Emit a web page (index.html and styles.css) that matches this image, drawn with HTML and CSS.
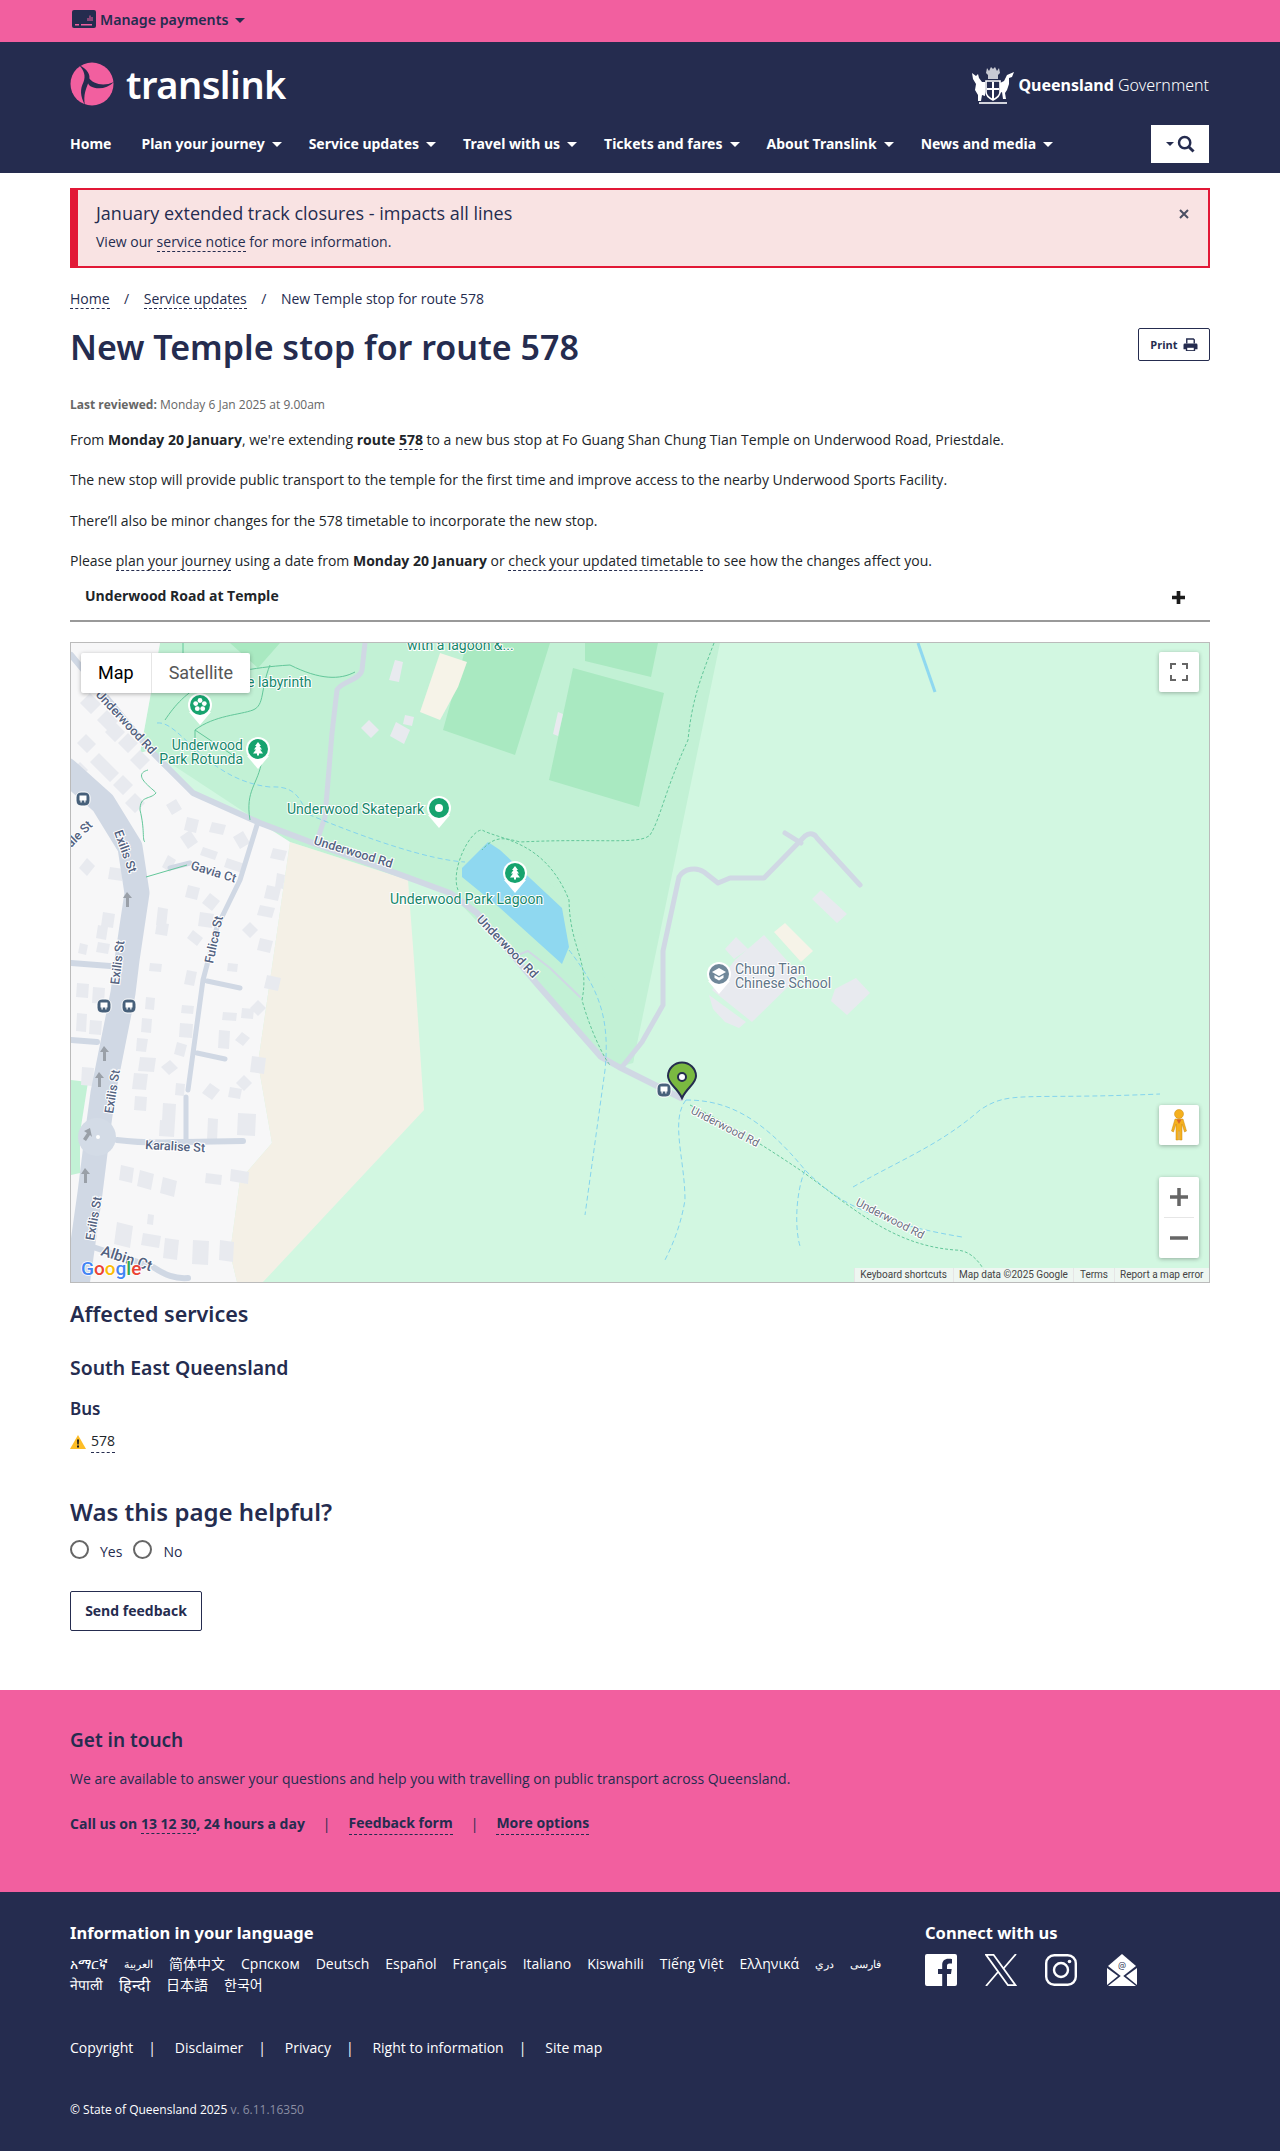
FILE: index.html
```html
<!DOCTYPE html>
<html lang="en">
<head>
<title>New Temple stop for route 578</title>
<meta charset="utf-8">
<link rel="stylesheet" href="styles.css">
</head>
<body>

<div class="topbar">
  <div class="wrap topbar-inner">
    <svg class="pay-icon" viewBox="0 0 24 18"><rect width="24" height="18" rx="2" fill="#252c4f"/><path d="M3 14h4v1.4H3zM9 14h11v1.4H9z" fill="#f25f9f"/><path d="M16 11V8M18 11V5.5M20 11V7" stroke="#f25f9f" stroke-width="1"/></svg>
    <span class="pay-label">Manage payments</span>
    <span class="caret caret-dark"></span>
  </div>
</div>

<header class="masthead">
  <div class="wrap">
    <div class="brand-row">
      <div class="logo">
        <svg class="logo-mark" viewBox="0 0 44 44">
          <circle cx="22" cy="22" r="21.5" fill="#f25f9f"/>
          <path d="M9 3C17 7 21 12 19 19C16 27 13 33 15 43C10 34 10 27 13.500 20C16 14 14 8 9 3Z" fill="#252c4f"/>
          <path d="M18 15C23 22 33 25 44 20C37 27 27 28 20 24C17.500 22 17 19 18 15Z" fill="#252c4f"/>
        </svg>
        <span class="logo-text">translink</span>
      </div>
      <div class="qgov">
        <svg class="crest" viewBox="0 0 44 42" fill="#fff">
          <path d="M1 10l4 3 2-2 1 4 3 4 3 0v14l-3-1-1 6h-3l0-6-3-5 1-6-3-5z"/>
          <path d="M43 9l-2 5-3 1 0 6-2 6-2 3 1 6h-3l-1-7-2 1V20l4-2 3-6z"/>
          <path d="M15 18h14v11c0 4-3 6-7 8-4-2-7-4-7-8z" fill="none" stroke="#fff" stroke-width="1.6"/>
          <path d="M21 19h2v17h-2zM16 25h12v2H16z"/>
          <path d="M18 8l2-4 2 2 2-2 2 4 2-3 1 5-2 2v4H17v-4l-2-2 1-5z" fill-opacity=".75"/>
          <path d="M8 39h28v2H8z" fill-opacity=".8"/>
        </svg>
        <span class="qgov-text"><b>Queensland</b> Government</span>
      </div>
    </div>
    <nav class="nav-row">
      <a class="nav-item nav-home">Home</a>
      <a class="nav-item">Plan your journey<span class="caret"></span></a>
      <a class="nav-item">Service updates<span class="caret"></span></a>
      <a class="nav-item">Travel with us<span class="caret"></span></a>
      <a class="nav-item">Tickets and fares<span class="caret"></span></a>
      <a class="nav-item">About Translink<span class="caret"></span></a>
      <a class="nav-item">News and media<span class="caret"></span></a>
      <button class="search-btn">
        <span class="caret caret-dark caret-small"></span>
        <svg viewBox="0 0 16 16" width="18" height="18"><circle cx="6.8" cy="6.8" r="5" fill="none" stroke="#252c4f" stroke-width="2.2"/><path d="M10.4 10.4l4.3 4.3" stroke="#252c4f" stroke-width="2.6"/></svg>
      </button>
    </nav>
  </div>
</header>

<main class="wrap main">
  <div class="alert">
    <div>
      <div class="alert-title">January extended track closures - impacts all lines</div>
      <div class="alert-text">View our <a class="dash">service notice</a> for more information.</div>
    </div>
    <svg class="alert-close" viewBox="0 0 10 10" width="10" height="10"><path d="M1 1l8 8M9 1l-8 8" stroke="#4a4f63" stroke-width="2"/></svg>
  </div>

  <div class="crumbs">
    <a class="dash">Home</a><span class="sep">/</span><a class="dash">Service updates</a><span class="sep">/</span><span>New Temple stop for route 578</span>
  </div>

  <div class="title-row">
    <h1>New Temple stop for route 578</h1>
    <button class="print-btn">Print
      <svg viewBox="0 0 16 15" width="15" height="14"><path d="M4 6V1h7l1 1v4" fill="none" stroke="#252c4f" stroke-width="1.5"/><path d="M2 6h12a1.5 1.5 0 0 1 1.5 1.5V12H13v2H3v-2H.5V7.500A1.500 1.500 0 0 1 2 6z" fill="#252c4f"/><path d="M4.500 10.500h7v2.500h-7z" fill="#fff"/></svg>
    </button>
  </div>

  <p class="reviewed"><b>Last reviewed:</b> Monday 6 Jan 2025 at 9.00am</p>

  <p class="copy">From <b>Monday 20 January</b>, we're extending <b>route <a class="dash">578</a></b> to a new bus stop at Fo Guang Shan Chung Tian Temple on Underwood Road, Priestdale.</p>
  <p class="copy">The new stop will provide public transport to the temple for the first time and improve access to the nearby Underwood Sports Facility.</p>
  <p class="copy">There’ll also be minor changes for the 578 timetable to incorporate the new stop.</p>
  <p class="copy copy-last">Please <a class="dash">plan your journey</a> using a date from <b>Monday 20 January</b> or <a class="dash">check your updated timetable</a> to see how the changes affect you.</p>

  <div class="accordion">
    <b>Underwood Road at Temple</b>
    <svg class="accordion-plus" viewBox="0 0 12 12" width="13" height="13"><path d="M6 0v12M0 6h12" stroke="#1b1b1b" stroke-width="3.400"/></svg>
  </div>

  <div class="map-box">
    <svg class="map" viewBox="71 643 1138 639" preserveAspectRatio="none">
      <rect x="71" y="643" width="1138" height="639" fill="#d2f7e1"/>
      <!-- park and fields -->
      <path d="M160 643H720L633 1063 619 1067 601 1057 537 984 477 913 600 1050 450 893 290 842 150 750 140 753Z" fill="#c2f1d5"/>
      <path d="M410 880L450 893 540 975 600 1052 633 1063 640 1020 590 960 569 900 500 840 440 860Z" fill="#c2f1d5"/>
      <path d="M230 643H280L258 668ZM467 643H550L515 755 443 730ZM585 643H658L651 677 585 661ZM573 668L664 693 639 807 549 780Z" fill="#a9e9c1"/>
      <!-- residential and sand -->
      <path d="M71 643H160L140 753 163 783 150 860 132 830 140 753 150 750 193 793 260 823 290 842 273 960 258 1063 272 1143 240 1180 230 1253 237 1282H71Z" fill="#f7f7f8"/>
      <path d="M71 1080L88 1082 80 1133 80 1173 71 1175Z" fill="#c2f1d5"/>
      <path d="M290 842L408 880 414 960 424 1110 263 1282H237L230 1253 240 1180 272 1143 258 1063 273 960Z" fill="#f4f0e6"/>
      <path d="M440 653L467 662 458 687 440 720 420 712Z" fill="#f6f3e8"/>
      <!-- lagoon -->
      <path d="M488 842L462 868 462 877 500 908 562 964 569 947 562 908 500 850Z" fill="#8fd8f0"/>
      <path d="M918 643L935 692" stroke="#8fd8f0" stroke-width="3" fill="none"/>
      <!-- buildings -->
      <path class="bld" d="M80 703l10-10 11 11-10 10zM97 720l10-10 11 11-10 10zM105 732l10-10 10 10-10 10zM118 743l10-10 10 10-10 10zM130 760l10-10 10 10-10 10zM77 743l9-9 10 10-9 9zM90 762l9-9 10 10-9 9zM100 772l9-9 10 10-9 9zM113 785l10-10 10 10-10 10zM125 803l10-10 10 10-10 10zM72 770l8-8 8 8-8 8z"/>
      <path class="bld" d="M166 805l10-6 6 10-10 6zM187 817l12 3-3 13-12-3zM212 822l14 3-3 10-14-3zM233 837l10-6 7 12-10 6zM180 837l10-7 8 12-10 7zM203 847l15 5-3 8-15-5zM227 858l18 6-3 9-18-6zM168 855l8 5-6 12-8-5zM273 848l14 3-3 10-14-3zM277 873l8 2-2 14-8-2zM267 885l14 3-3 13-14-3zM260 905l15 3-3 10-15-3zM250 922l8 8-8 8-8-8zM260 938l13 3-3 12-13-3zM210 893l10 8-8 10-10-8zM188 885l12 3-3 12-12-3zM200 912l14 2-2 14-14-2zM158 907l10 2-2 18-10-2zM157 922l12 2-2 12-12-2zM193 930l10 8-6 8-10-8zM103 912l12 2-2 14-12-2zM98 925l10 2-2 13-10-2zM110 867l14 2-2 12-14-2zM87 858l8 8-8 10-8-8zM98 942l12 2-2 10-12-2zM80 943l8 2-2 10-8-2z"/>
      <path class="bld" d="M150 963l12 1-1 8-12-1zM187 970l10 2-3 14-10-2zM228 963l10 1-1 8-10-1zM267 975l14 3-3 13-14-3zM146 997l9 1-1 12-9-1zM182 1005l12 1-1 8-12-1zM223 1012l14 1-1 8-14-1zM242 1008l12 1-1 10-12-1zM258 1000l8 8-8 8-8-8zM142 1018l10 1-1 14-10-1zM180 1023l13 1-1 14-13-1zM219 1030l11 1-1 18-11-1zM242 1032l8 6-7 8-8-6zM137 1038l11 1-2 13-10-1zM177 1042l10 3-3 12-10-3zM140 1057l16 1-2 14-16-1zM170 1060l8 8-9 7-8-8zM252 1056l14 2-2 16-14-2zM134 1073l14 1-2 16-14-1zM176 1083l9 1-1 12-9-1zM210 1083l10 7-8 10-10-7zM230 1087l12 2-2 10-12-2zM244 1075l8 8-8 8-8-8zM135 1096l12 1-1 14-12-1zM163 1103l13 1-1 18-13-1zM160 1120l15 1-1 16-15-1zM208 1118l10 1-1 22-10-1zM238 1113l18 1-1 22-18-1zM121 1165l13 3-2 15-13-3zM140 1170l14 4-3 16-14-4zM163 1177l14 4-3 16-14-4zM206 1173l16 2-1 10-16-2zM231 1169l18 3-1 12-18-3zM117 1222l16 4-3 22-16-4zM143 1233l18 3-2 12-18-3zM165 1238l14 2-2 20-14-2zM193 1240l16 1-1 24-16-1zM220 1240l14 2-1 20-14-2zM148 1214l6 1-1 10-6-1zM77 983l12 1-1 14-12-1zM93 987l12 1-1 16-12-1zM90 1020l12 1-1 14-12-1zM77 1013l10 1-1 18-10-1zM82 1067l12 1-1 18-12-1z"/>
      <path class="bld" d="M764 935L800 975 752 1022 712 990 735 960ZM736 937L748 949 734 959 725 949ZM821 890L847 914 837 923 812 899ZM856 978L870 993 847 1015 831 1001 835 989ZM709 995L746 1022 739 1028 725 1022 713 1009ZM395 660l8 2-4 20-10-2zM405 715l9 2-2 9-9-2zM369 720l10 10-8 8-10-10zM396 722l14 8-6 14-14-8zM558 712l5 2-5 22-5-2z"/>
      <path d="M785 923L813 951 801 962 774 932Z" fill="#f6f3e8"/>
      <!-- roads -->
      <g class="road">
        <path d="M71 655L150 750 193 793 260 823 313 843 393 872 450 893 477 913 537 984 601 1057 619 1067 681 1098" stroke-width="6"/>
        <path d="M365 643L362 670C360 680 340 682 337 690L332 733 325 817 318 838" stroke-width="5"/>
        <path d="M622 1067L642 1042 663 1005V951L679 877C684 868 697 867 704 872L718 883 730 878H764L805 836C810 832 815 834 817 838L860 885M785 833L801 843" stroke-width="5"/>
        <path d="M518 955L528 951 550 968 580 997" stroke-width="2"/>
        <path d="M257 825L240 880 217 927 203 980 188 1090M186 1097V1140M207 981L240 988M197 1053L225 1059" stroke-width="5"/>
        <path d="M117 1140C140 1143 160 1143 186 1142L243 1141" stroke-width="6"/>
        <path d="M190 863L170 868" stroke-width="5"/>
        <path d="M93 1247L153 1267C165 1275 175 1279 188 1278M71 963L110 966M71 1040L97 1042" stroke-width="6"/>
        <path d="M66 770L103 803 130 847 137 893 127 960 123 993 103 1093 97 1137 90 1193 77 1285" stroke-width="25"/>
      </g>
      <circle cx="97" cy="1137" r="19" fill="#d3dbe6"/>
      <circle cx="98" cy="1137" r="2" fill="#fff"/>
      <!-- paths -->
      <g class="trail-green">
        <path d="M183 643V680M165 720C185 690 210 670 290 665 320 680 340 680 355 672M195 730C215 715 240 715 253 710 265 705 260 690 270 665M195 730V755M195 730L240 760M262 760C258 785 245 790 250 820M148 770C130 775 155 790 156 793 150 800 140 795 140 810 145 830 142 840 145 842M146 877L187 865"/>
      </g>
      <g class="trail-green dashed">
        <path d="M714 643C700 680 692 700 688 740 665 790 660 820 650 835 640 845 600 838 520 842 505 838 495 835 482 850M458 890C450 870 470 830 482 830 500 840 545 840 569 900 570 950 590 960 582 1000 590 1030 605 1060 610 1065M690 1105C740 1130 770 1150 800 1170 850 1205 890 1245 955 1250 975 1250 985 1270 990 1283"/>
      </g>
      <g class="trail-blue">
        <path d="M157 723C180 720 205 780 270 787 300 785 300 805 310 815 370 840 430 860 465 862M569 950C600 990 610 1020 605 1070L585 1215M686 1100C725 1100 760 1115 805 1170 830 1195 860 1220 962 1237M686 1100C670 1120 685 1160 685 1200 680 1230 670 1250 664 1262M805 1170C795 1195 795 1230 800 1246M853 1187C900 1160 940 1145 980 1110 1010 1090 1020 1100 1160 1094"/>
      </g>
      <!-- labels -->
      <g class="poi-label">
        <text x="407" y="650">with a lagoon &amp;...</text>
        <text x="247" y="687">e labyrinth</text>
        <text x="243" y="750" text-anchor="end">Underwood</text>
        <text x="243" y="764" text-anchor="end">Park Rotunda</text>
        <text x="287" y="814">Underwood Skatepark</text>
        <text x="390" y="904">Underwood Park Lagoon</text>
      </g>
      <g class="poi-label poi-grey">
        <text x="735" y="974">Chung Tian</text>
        <text x="735" y="988">Chinese School</text>
      </g>
      <g class="road-label">
        <text transform="translate(95 695) rotate(47)">Underwood Rd</text>
        <text transform="translate(313 844) rotate(17)">Underwood Rd</text>
        <text transform="translate(476 920) rotate(46)">Underwood Rd</text>
        <text transform="translate(190 869) rotate(17)">Gavia Ct</text>
        <text transform="translate(213 964) rotate(-78)">Fulica St</text>
        <text transform="translate(114 832) rotate(70)">Exilis St</text>
        <text transform="translate(119 985) rotate(-83)">Exilis St</text>
        <text transform="translate(113 1114) rotate(-81)">Exilis St</text>
        <text transform="translate(94 1241) rotate(-80)">Exilis St</text>
        <text transform="translate(145 1149) rotate(3)">Karalise St</text>
        <text transform="translate(71 848) rotate(-45)">ale St</text>
        <text class="road-label-big" transform="translate(100 1255) rotate(18)">Albin Ct</text>
      </g>
      <g class="road-label road-label-thin">
        <text transform="translate(690 1113) rotate(27)">Underwood Rd</text>
        <text transform="translate(855 1205) rotate(27)">Underwood Rd</text>
      </g>
      <!-- one way arrows -->
      <path class="arrow" d="M127 892l-4 6h3v9h3v-9h3zM104 1046l-4 6h3v9h3v-9h3zM99 1072l-4 6h3v9h3v-9h3zM85 1168l-4 6h3v9h3v-9h3zM90 1128l-6 3 3 2-4 6 3 2 4-6 2 2z"/>
      <!-- markers -->
      <g class="poi">
        <path d="M189 712L200 725 211 712Z" fill="#fff"/><circle cx="200" cy="705" r="12" fill="#fff"/><circle cx="200" cy="705" r="10"/>
        <g fill="#fff"><circle cx="200" cy="700.500" r="2.400"/><circle cx="204.300" cy="703.600" r="2.400"/><circle cx="202.700" cy="708.700" r="2.400"/><circle cx="197.300" cy="708.700" r="2.400"/><circle cx="195.700" cy="703.600" r="2.400"/></g>
        <path d="M247 756L258 769 269 756Z" fill="#fff"/><circle cx="258" cy="749" r="12" fill="#fff"/><circle cx="258" cy="749" r="10"/>
        <path d="M258 742l-3 4h1.500l-2.500 3.500h2l-3 4h4v2h2v-2h4l-3-4h2l-2.500-3.500h1.500z" fill="#fff"/>
        <path d="M428 815L439 828 450 815Z" fill="#fff"/><circle cx="439" cy="808" r="12" fill="#fff"/><circle cx="439" cy="808" r="10"/>
        <circle cx="439" cy="808" r="4" fill="#fff"/>
        <path d="M504 880L515 893 526 880Z" fill="#fff"/><circle cx="515" cy="873" r="12" fill="#fff"/><circle cx="515" cy="873" r="10"/>
        <path d="M515 866l-3 4h1.500l-2.500 3.500h2l-3 4h4v2h2v-2h4l-3-4h2l-2.500-3.500h1.500z" fill="#fff"/>
        <path d="M708 981L719 994 730 981Z" fill="#fff"/><circle cx="719" cy="974" r="12" fill="#fff"/><circle cx="719" cy="974" r="10" fill="#6f8799"/>
        <path d="M719 968l-7 4 7 4 7-4zM714.500 975v3l4.500 2.500 4.500-2.500v-3l-4.500 2.500z" fill="#fff"/>
      </g>
      <g class="bus">
        <rect x="76" y="792" width="14" height="14" rx="5"/><rect x="97" y="999" width="14" height="14" rx="5"/><rect x="122" y="999" width="14" height="14" rx="5"/><rect x="657" y="1083" width="14" height="14" rx="5"/>
        <path fill="#fff" d="M79.500 795.500h7v5h-1v2h-1.200v-2h-2.600v2h-1.200v-2h-1zM100.500 1002.500h7v5h-1v2h-1.200v-2h-2.600v2h-1.200v-2h-1zM125.500 1002.500h7v5h-1v2h-1.200v-2h-2.600v2h-1.200v-2h-1zM660.500 1086.500h7v5h-1v2h-1.200v-2h-2.600v2h-1.200v-2h-1z"/>
      </g>
      <path d="M682 1098C677 1087 668 1084 668 1076A14 13.500 0 0 1 696 1076C696 1084 687 1087 682 1098Z" fill="#7ab941" stroke="#252c4f" stroke-width="2"/>
      <circle cx="682" cy="1077" r="4" fill="#fff" stroke="#252c4f" stroke-width="2"/>
      <text class="g-logo" x="81" y="1275"><tspan fill="#4285f4">G</tspan><tspan fill="#ea4335">o</tspan><tspan fill="#fbbc05">o</tspan><tspan fill="#4285f4">g</tspan><tspan fill="#34a853">l</tspan><tspan fill="#ea4335">e</tspan></text>
    </svg>

    <div class="map-types">
      <span class="map-type map-type-on">Map</span>
      <span class="map-type">Satellite</span>
    </div>
    <div class="map-ctl map-full">
      <svg viewBox="0 0 18 18" width="18" height="18"><path d="M1 6V1h5M12 1h5v5M17 12v5h-5M6 17H1v-5" fill="none" stroke="#666" stroke-width="2"/></svg>
    </div>
    <div class="map-ctl map-peg">
      <svg viewBox="0 0 18 32" width="18" height="32"><circle cx="9" cy="5" r="4.500" fill="#f5b01e" stroke="#c98a10" stroke-width=".5"/><path d="M5 10h8l3.500 12-2 1L12 15v16H9.500V22h-1v9H6V15L3.500 23l-2-1Z" fill="#f5b01e" stroke="#c98a10" stroke-width=".5"/><path d="M6.500 10.500L9 15l2.500-4.500z" fill="#d9682a"/></svg>
    </div>
    <div class="map-ctl map-zoom">
      <svg viewBox="0 0 18 18" width="18" height="18"><path d="M9 0v18M0 9h18" stroke="#666" stroke-width="3.500"/></svg>
      <span class="zoom-line"></span>
      <svg viewBox="0 0 18 18" width="18" height="18"><path d="M0 9h18" stroke="#666" stroke-width="3.500"/></svg>
    </div>
    <div class="map-attr">
      <span>Keyboard shortcuts</span><span>Map data ©2025 Google</span><span>Terms</span><span>Report a map error</span>
    </div>
  </div>

  <h2 class="affected">Affected services</h2>
  <h3 class="region">South East Queensland</h3>
  <h4 class="mode">Bus</h4>
  <div class="route-row">
    <svg viewBox="0 0 16 14" width="16" height="14"><path d="M8 0l8 14H0z" fill="#fdbd26"/><path d="M7 4.500h2l-.3 5H7.300zM7 10.500h2v2H7z" fill="#1b1b1b"/></svg>
    <a class="dash">578</a>
  </div>

  <h2 class="helpful">Was this page helpful?</h2>
  <div class="radios">
    <label class="radio"><span class="radio-dot"></span>Yes</label>
    <label class="radio"><span class="radio-dot"></span>No</label>
  </div>
  <button class="send-btn">Send feedback</button>
</main>

<section class="touch">
  <div class="wrap">
    <h2 class="touch-title">Get in touch</h2>
    <p class="touch-text">We are available to answer your questions and help you with travelling on public transport across Queensland.</p>
    <div class="touch-links">
      <span>Call us on <a class="dash">13 12 30</a>, 24 hours a day</span><span class="bar">|</span><a class="dash">Feedback form</a><span class="bar">|</span><a class="dash">More options</a>
    </div>
  </div>
</section>

<footer class="footer">
  <div class="wrap">
    <div class="footer-top">
      <div class="lang-col">
        <h3 class="foot-title">Information in your language</h3>
        <div class="langs">
          <a>አማርኛ</a><a class="lang-small">العربية</a><a>简体中文</a><a>Српском</a><a>Deutsch</a><a>Español</a><a>Français</a><a>Italiano</a><a>Kiswahili</a><a>Tiếng Việt</a><a>Ελληνικά</a><a class="lang-small">دري</a><a class="lang-small">فارسی</a><a>नेपाली</a><a class="lang-big">हिन्दी</a><a>日本語</a><a>한국어</a>
        </div>
      </div>
      <div class="connect-col">
        <h3 class="foot-title">Connect with us</h3>
        <div class="socials">
          <svg viewBox="0 0 32 32" width="32" height="32"><path d="M2 0h28a2 2 0 0 1 2 2v28a2 2 0 0 1-2 2h-8V20h4l.7-5H22v-3c0-1.500.5-2.500 2.600-2.500H27V5c-.5 0-2-.2-3.700-.2-3.600 0-6.100 2.200-6.100 6.300V15H13v5h4.200v12H2a2 2 0 0 1-2-2V2a2 2 0 0 1 2-2z" fill="#fff"/></svg>
          <svg viewBox="0 0 32 32" width="32" height="32"><path d="M1 32L13 18M31 0L18.500 14.500" stroke="#fff" stroke-width="1.800"/><path d="M1 .8h7.500L30.500 31.200H23Z" fill="none" stroke="#fff" stroke-width="1.800"/></svg>
          <svg viewBox="0 0 32 32" width="32" height="32" fill="none" stroke="#fff" stroke-width="2.400"><rect x="1.200" y="1.200" width="29.600" height="29.600" rx="8"/><circle cx="16" cy="16" r="7"/><circle cx="24.500" cy="7.500" r="1.800" fill="#fff" stroke="none"/></svg>
          <svg class="mail-icon" viewBox="0 0 30 32" width="30" height="32"><path d="M15 0L29 12 15 23 1 12Z" fill="#fff"/><path d="M0 14L11 22 0 31ZM30 14L19 22 30 31ZM1 32L15 21 29 32Z" fill="#fff"/><text class="mail-at" x="15" y="15" text-anchor="middle">@</text></svg>
        </div>
      </div>
    </div>
    <div class="foot-links">
      <a>Copyright</a><span class="foot-bar">|</span><a>Disclaimer</a><span class="foot-bar">|</span><a>Privacy</a><span class="foot-bar">|</span><a>Right to information</a><span class="foot-bar">|</span><a>Site map</a>
    </div>
    <p class="copyright">© State of Queensland 2025 <span>v. 6.11.16350</span></p>
  </div>
</footer>

</body>
</html>
```

FILE: styles.css
```css
body {
  margin: 0;
  background: #fff;
  color: #212529;
  font-family: "Open Sans", "Noto Sans CJK SC", sans-serif;
  font-size: 14px;
  line-height: 22px;
}

p, h1, h2, h3, h4 {
  margin: 0;
}

.wrap {
  width: 1140px;
  margin-left: auto;
  margin-right: auto;
}

.dash {
  border-bottom: 1px dashed #252c4f;
}

.caret {
  display: inline-block;
  width: 0;
  height: 0;
  margin-left: 7px;
  vertical-align: 2px;
  border-left: 5px solid transparent;
  border-right: 5px solid transparent;
  border-top: 5px solid #fff;
}

.caret-dark {
  border-top-color: #252c4f;
}

.caret-small {
  margin-left: 0;
  margin-right: 3px;
  border-left-width: 4px;
  border-right-width: 4px;
  border-top-width: 4px;
}

/* top bars */
.topbar {
  height: 42px;
  background: #f25f9f;
}

.topbar-inner {
  display: flex;
  align-items: center;
  height: 40px;
  padding-left: 2px;
  box-sizing: border-box;
  color: #252c4f;
}

.pay-icon {
  width: 24px;
  height: 18px;
  margin-right: 4px;
  margin-top: -2px;
}

.pay-label {
  font-family: "Noto Sans", sans-serif;
  font-weight: 600;
  font-size: 14.2px;
}

.masthead {
  height: 131px;
  background: #252c4f;
  color: #fff;
}

.brand-row {
  display: flex;
  justify-content: space-between;
  align-items: center;
  height: 83px;
}

.logo {
  display: flex;
  align-items: center;
}

.logo-mark {
  width: 44px;
  height: 44px;
}

.logo-text {
  margin-left: 12px;
  font-family: "Noto Sans", sans-serif;
  font-weight: 600;
  font-size: 38px;
  line-height: 44px;
  letter-spacing: -.5px;
}

.qgov {
  display: flex;
  align-items: center;
  margin-right: 1px;
}

.crest {
  width: 44px;
  height: 42px;
  margin-right: 3px;
}

.qgov-text {
  margin-top: 2px;
  font-family: "Noto Sans", sans-serif;
  font-weight: 300;
  font-size: 16px;
}

.qgov-text b {
  font-weight: 700;
}

.nav-row {
  display: flex;
  align-items: center;
  height: 38px;
}

.nav-item {
  margin-right: 27px;
  font-family: "Noto Sans", sans-serif;
  font-weight: 700;
  font-size: 14px;
  white-space: nowrap;
}

.nav-home {
  margin-right: 30px;
}

.search-btn {
  display: flex;
  align-items: center;
  justify-content: center;
  width: 58px;
  height: 38px;
  margin-left: auto;
  margin-right: 1px;
  padding: 0;
  border: 0;
  background: #fff;
}

/* main column */
.main {
  padding-bottom: 59px;
}

.alert {
  display: flex;
  justify-content: space-between;
  box-sizing: border-box;
  height: 80px;
  margin-top: 15px;
  padding: 11px 19px 0 18px;
  border: 2px solid #e21836;
  border-left-width: 8px;
  background: #f9e3e3;
}

.alert-title {
  font-size: 18px;
  line-height: 24px;
  color: #252c4f;
}

.alert-text {
  margin-top: 6px;
  line-height: 22px;
  color: #252c4f;
}

.alert-close {
  margin-top: 8px;
}

.crumbs {
  margin-top: 21px;
  line-height: 20px;
  color: #252c4f;
}

.sep {
  margin: 0 14.5px;
}

.title-row {
  display: flex;
  justify-content: space-between;
  align-items: flex-start;
  margin-top: 19px;
}

h1 {
  margin-top: -1px;
  font-family: "Noto Sans", sans-serif;
  font-weight: 600;
  font-size: 34px;
  line-height: 40px;
  color: #252c4f;
}

.print-btn {
  display: flex;
  align-items: center;
  justify-content: center;
  gap: 5px;
  width: 72px;
  height: 33px;
  padding: 0;
  border: 1px solid #252c4f;
  border-radius: 2px;
  background: #fff;
  color: #252c4f;
  font-family: "Open Sans", sans-serif;
  font-weight: 700;
  font-size: 11px;
}

.reviewed {
  margin-top: 29px;
  font-size: 12px;
  line-height: 18px;
  color: #666;
}

.copy {
  margin-top: 15px;
  margin-bottom: 18.4px;
}

.copy + .copy {
  margin-top: 0;
}

.copy-last {
  margin-bottom: 0;
}

.accordion {
  display: flex;
  justify-content: space-between;
  align-items: center;
  padding: 13px 25px 13px 15px;
  border-bottom: 2px solid #999;
}

.accordion-plus {
  margin-top: 2px;
}

/* map */
.map-box {
  position: relative;
  box-sizing: border-box;
  height: 641px;
  margin-top: 20px;
  border: 1px solid #bbb;
  overflow: hidden;
}

.map {
  display: block;
  width: 1138px;
  height: 639px;
}

.map text {
  font-family: Roboto, sans-serif;
}

.bld {
  fill: #e8eaef;
}

.road path {
  fill: none;
  stroke: #d0d8e4;
  stroke-linecap: round;
  stroke-linejoin: round;
}

.trail-green path {
  fill: none;
  stroke: #63c79a;
  stroke-width: 1;
}

.dashed path {
  stroke-dasharray: 3 2;
}

.trail-blue path {
  fill: none;
  stroke: #84d4ee;
  stroke-width: 1;
  stroke-dasharray: 5 3;
}

.poi-label text {
  font-size: 14px;
  fill: #14876b;
  stroke: #fff;
  stroke-width: 2px;
  paint-order: stroke;
}

.poi-grey text {
  fill: #5f7688;
}

.road-label text {
  font-weight: 500;
  font-size: 12.5px;
  fill: #53627f;
  stroke: #fff;
  stroke-width: 2px;
  paint-order: stroke;
}

.road-label .road-label-big {
  font-size: 15px;
}

.road-label-thin text {
  font-weight: 400;
  font-size: 11.5px;
  fill: #6b7080;
}

.arrow {
  fill: #9aa0a8;
}

.poi circle {
  fill: #16a36e;
}

.poi g circle,
.poi circle[fill="#fff"] {
  fill: #fff;
}

.poi circle[fill="#6f8799"] {
  fill: #6f8799;
}

.bus rect {
  fill: #47607a;
  stroke: #fff;
  stroke-width: 1;
}

.g-logo {
  font-size: 19px;
  font-weight: 500;
  stroke: #fff;
  stroke-width: 1.500px;
  paint-order: stroke;
}

.map-types {
  position: absolute;
  left: 10px;
  top: 10px;
  display: flex;
  height: 40px;
  background: #fff;
  border-radius: 2px;
  box-shadow: 0 1px 4px rgba(0, 0, 0, .3);
  font-family: Roboto, sans-serif;
  font-size: 18px;
  line-height: 40px;
  color: #565656;
}

.map-type {
  padding: 0 17px;
}

.map-type-on {
  border-right: 1px solid #e6e6e6;
  color: #000;
}

.map-ctl {
  position: absolute;
  left: 1088px;
  display: flex;
  align-items: center;
  justify-content: center;
  width: 40px;
  height: 40px;
  background: #fff;
  border-radius: 2px;
  box-shadow: 0 1px 4px rgba(0, 0, 0, .3);
}

.map-full {
  top: 9px;
}

.map-peg {
  top: 462px;
}

.map-zoom {
  top: 534px;
  height: 81px;
  flex-direction: column;
  gap: 11px;
}

.zoom-line {
  width: 30px;
  height: 1px;
  background: #e6e6e6;
}

.map-attr {
  position: absolute;
  right: 0;
  bottom: 0;
  display: flex;
  height: 14px;
  background: rgba(245, 245, 245, .8);
  font-family: Roboto, sans-serif;
  font-size: 10px;
  line-height: 14px;
  color: #444;
}

.map-attr span {
  padding: 0 5.5px;
  border-left: 1px solid #e6e6e6;
}

/* affected services */
h2, h3, h4 {
  font-family: "Noto Sans", sans-serif;
  color: #252c4f;
}

.affected {
  margin-top: 16px;
  font-weight: 600;
  font-size: 21.5px;
  line-height: 30px;
}

.region {
  margin-top: 26px;
  font-weight: 600;
  font-size: 19.4px;
  line-height: 26px;
}

.mode {
  margin-top: 16px;
  font-weight: 600;
  font-size: 17px;
  line-height: 24px;
}

.route-row {
  display: flex;
  align-items: center;
  gap: 5px;
  margin-top: 9px;
}

.helpful {
  margin-top: 43px;
  font-weight: 600;
  font-size: 24px;
  line-height: 32px;
}

.radios {
  display: flex;
  gap: 11px;
  margin-top: 12px;
  height: 20px;
}

.radio {
  display: flex;
  align-items: flex-start;
  line-height: 24px;
  color: #252c4f;
}

.radio-dot {
  box-sizing: border-box;
  width: 19px;
  height: 19px;
  margin-right: 11px;
  border: 2px solid #666;
  border-radius: 50%;
  background: #fff;
}

.send-btn {
  display: block;
  width: 132px;
  height: 40px;
  margin-top: 31px;
  padding: 0 0 2px;
  border: 1px solid #252c4f;
  border-radius: 2px;
  background: #fff;
  color: #252c4f;
  font-family: "Open Sans", sans-serif;
  font-weight: 700;
  font-size: 14px;
}

/* footer */
.touch {
  padding: 36px 0 57px;
  background: #f25f9f;
  color: #252c4f;
}

.touch-title {
  font-weight: 600;
  font-size: 19px;
  line-height: 28px;
}

.touch-text {
  margin-top: 14px;
}

.touch-links {
  display: flex;
  margin-top: 23px;
  font-weight: 700;
}

.touch-links .dash {
  display: inline-block;
  line-height: 19px;
}

.bar {
  margin: 0 18px;
  font-weight: 400;
}

.footer {
  padding: 29px 0 33px;
  background: #252c4f;
  color: #fff;
}

.footer-top {
  display: flex;
}

.lang-col {
  width: 855px;
}

.foot-title {
  font-weight: 700;
  font-size: 16.5px;
  line-height: 24px;
  color: #fff;
}

.langs {
  display: flex;
  flex-wrap: wrap;
  column-gap: 16px;
  margin-top: 9px;
  padding-right: 20px;
  line-height: 20.5px;
}

.lang-small {
  font-size: 11px;
}

.lang-big {
  font-size: 16px;
}

.socials {
  display: flex;
  gap: 28px;
  margin-top: 9px;
}

.mail-icon {
  margin-left: 2px;
}

.mail-at {
  font-family: "Open Sans", sans-serif;
  font-size: 9px;
  fill: #252c4f;
}

.foot-links {
  display: flex;
  margin-top: 42px;
}

.foot-bar {
  margin: 0 0 0 15px;
  width: 26.5px;
}

.copyright {
  margin-top: 42px;
  font-size: 12px;
  line-height: 18px;
}

.copyright span {
  color: #8a8ea3;
}
```
